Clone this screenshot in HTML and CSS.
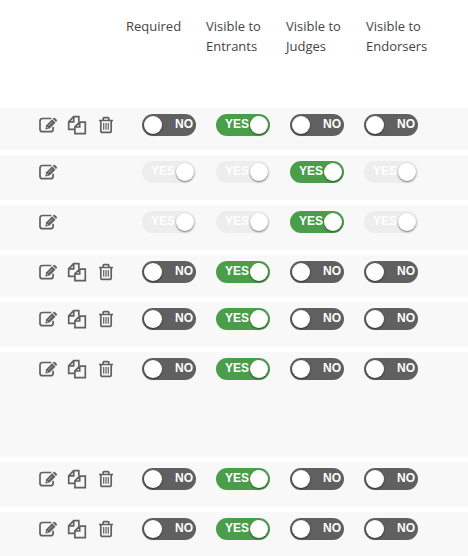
FILE: index.html
```
<!DOCTYPE html>
<html lang="en">
<head>
<meta charset="utf-8">
<title>Form fields</title>
<link rel="stylesheet" href="styles.css">
</head>
<body>
<svg class="sprite" aria-hidden="true">
  <symbol id="edit" viewBox="0 0 18 18">
    <path d="M12.300 2.500H3.600Q1 2.500 1 5v8.200q0 2.500 2.600 2.500h8q2.500 0 2.500-2.500v-2.400" fill="none" stroke="currentColor" stroke-width="1.700"/>
    <path d="M6.300 13.500l.9-4.300 5.900-5.900 3.400 3.400-5.900 5.900z" fill="currentColor"/>
    <path d="M13.800 2.700l.7-.7q.8-.6 1.400 0l1.800 1.800q.6.700 0 1.400l-.7.700z" fill="currentColor"/>
    <path d="M9.400 9.900l3.800-3.800" stroke="#f8f8f8" stroke-width=".5"/>
    <path d="M7.800 11.100l1 1" stroke="#f8f8f8" stroke-width=".9"/>
  </symbol>
  <symbol id="copy" viewBox="0 0 20 20">
    <path d="M7.300 14.300H1.700V6.900L6.600 1.700h5.200v5M6.700 1.700v5.200H1.700" fill="none" stroke="currentColor" stroke-width="1.700"/>
    <path d="M12.600 7.200h5.700v11.500H7.900v-6.800zM12.700 7.200v4.800H7.900" fill="none" stroke="currentColor" stroke-width="1.700"/>
  </symbol>
  <symbol id="trash" viewBox="0 0 14 18">
    <path d="M0 4.500h14M4.200 4V2.400q0-.8.800-.8h4q.8 0 .8.800V4M1.800 4.500v10.200q0 1.700 1.700 1.700h7q1.700 0 1.700-1.700V4.500" fill="none" stroke="currentColor" stroke-width="1.700"/>
    <path d="M4.700 7v6.700M7 7v6.700M9.300 7v6.700" stroke="currentColor" stroke-width="1.200"/>
  </symbol>
</svg>
<table class="fields">
  <thead>
    <tr class="head">
      <th scope="col">Required</th>
      <th scope="col">Visible to Entrants</th>
      <th scope="col">Visible to Judges</th>
      <th scope="col">Visible to Endorsers</th>
    </tr>
  </thead>
  <tbody id="rows"></tbody>
</table>
<script src="rows.js"></script>
</body>
</html>
```
FILE: styles.css
```
* {
  box-sizing: border-box;
}

body {
  margin: 0;
  background: #fff;
  color: #444;
  font: 13px/20px "Open Sans", sans-serif;
}

.sprite {
  display: none;
}

.fields,
.fields thead {
  display: block;
}

.head {
  display: flex;
  min-height: 108px;
  padding: 16px 0 0 126px;
}

.head th {
  width: 80px;
  padding: 0 12px 0 0;
  font-weight: 400;
  text-align: left;
}

.fields tbody {
  display: flex;
  flex-direction: column;
  gap: 5px;
}

.row {
  display: flex;
  min-height: 45px;
  padding: 6px 0 0 39px;
  background: #f8f8f8;
}

.row.short {
  min-height: 42px;
}

.row.tall {
  min-height: 105px;
}

.row:last-child {
  min-height: 44px;
}

.row td {
  width: 74px;
  padding: 0;
}

.row .actions {
  display: flex;
  align-items: center;
  width: 103px;
  height: 22px;
  gap: 10px;
}

.actions button {
  display: flex;
  padding: 0;
  border: 0;
  background: none;
  color: #606060;
  cursor: pointer;
}

.icon-edit {
  width: 18px;
  height: 18px;
}

.icon-copy {
  width: 20px;
  height: 20px;
}

.icon-trash {
  width: 14px;
  height: 18px;
  margin-left: 2px;
}

.toggle {
  position: relative;
  display: flex;
  justify-content: flex-end;
  width: 54px;
  height: 22px;
  padding: 0 3px;
  border-radius: 11px;
  background: #606060;
  color: #fff;
  font: bold 12px/20px "Liberation Sans", Arial, sans-serif;
}

.toggle input {
  position: absolute;
  top: 2px;
  left: 2px;
  width: 18px;
  height: 18px;
  margin: 0;
  border-radius: 50%;
  appearance: none;
  background: #fff;
  box-shadow: 0 1px 2px rgba(0, 0, 0, 0.5);
}

.toggle.on {
  justify-content: flex-start;
  padding: 0 9px;
  background: #4a9e4a;
}

.toggle.on input {
  left: 34px;
}

.toggle.disabled {
  background: #ededed;
}
```
FILE: rows.js
```
const columns = ["Required", "Visible to Entrants", "Visible to Judges", "Visible to Endorsers"];

// n = no, y = yes, d = locked at yes
const rows = [
  { states: "nynn", size: "short" },
  { states: "ddyd", locked: true },
  { states: "ddyd", locked: true },
  { states: "nynn", size: "short" },
  { states: "nynn" },
  { states: "nynn", size: "tall" },
  { states: "nynn" },
  { states: "nynn" }
];

const action = (icon, label) =>
  `<button type="button" aria-label="${label}"><svg class="icon-${icon}"><use href="#${icon}"/></svg></button>`;

const toggle = (state, label) => {
  const on = state !== "n";
  const locked = state === "d";
  return `<td><label class="toggle${on ? " on" : ""}${locked ? " disabled" : ""}">
    <input type="checkbox" aria-label="${label}"${on ? " checked" : ""}${locked ? " disabled" : ""}>
    <span>${on ? "YES" : "NO"}</span></label></td>`;
};

document.getElementById("rows").innerHTML = rows.map(row => `
  <tr class="row ${row.size || ""}">
    <td class="actions">${action("edit", "Edit")}${row.locked ? "" : action("copy", "Copy") + action("trash", "Delete")}</td>
    ${[...row.states].map((state, i) => toggle(state, columns[i])).join("")}
  </tr>`).join("");

document.getElementById("rows").addEventListener("change", event => {
  const label = event.target.closest(".toggle");
  label.classList.toggle("on", event.target.checked);
  label.querySelector("span").textContent = event.target.checked ? "YES" : "NO";
});
```
